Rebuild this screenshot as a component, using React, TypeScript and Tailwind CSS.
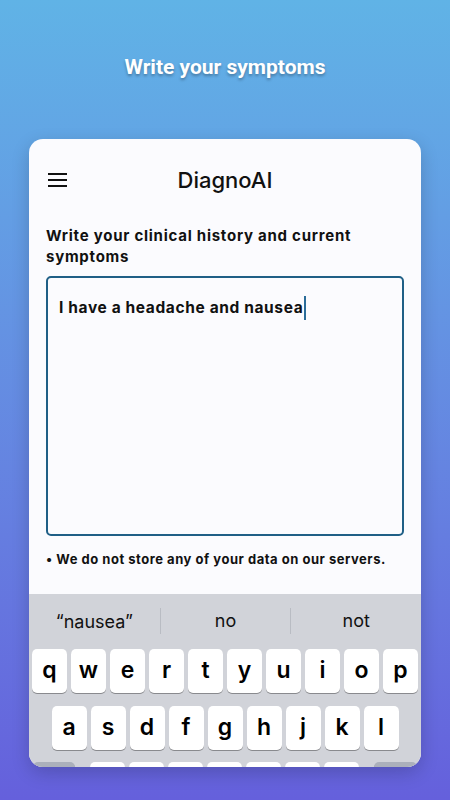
import React from "react";

const row1 = ["q", "w", "e", "r", "t", "y", "u", "i", "o", "p"];
const row2 = ["a", "s", "d", "f", "g", "h", "j", "k", "l"];
const row3 = ["z", "x", "c", "v", "b", "n", "m"];

const Key = ({ label }: { label?: string }) => (
  <div className="w-[35px] h-[44px] rounded-[5px] bg-white shadow-[0_1px_0_#898a8e] flex items-center justify-center text-[23px] font-semibold text-black leading-none pb-[2px]">
    {label}
  </div>
);

const App = () => {
  return (
    <div className="w-full h-[800px] overflow-hidden bg-gradient-to-b from-[#60b3e6] to-[#6560dc] font-['Inter',sans-serif]">
      <div className="h-[139px] flex items-center justify-center pb-[3px]">
        <h1 className="text-white text-[21px] font-bold font-['Roboto',sans-serif] [text-shadow:0_2px_3px_rgba(0,0,0,0.3)]">
          Write your symptoms
        </h1>
      </div>

      <div className="mx-[29px] h-[628px] rounded-[14px] bg-[#fbfbfe] overflow-hidden shadow-[0_6px_18px_rgba(0,0,0,0.18)] flex flex-col">
        {/* header */}
        <div className="relative h-[82px] flex items-center justify-center shrink-0">
          <svg className="absolute left-[19px] top-[33px]" width="19" height="16" viewBox="0 0 19 16">
            <rect x="0" y="1" width="19" height="2" fill="#111" />
            <rect x="0" y="7" width="19" height="2" fill="#111" />
            <rect x="0" y="13" width="19" height="2" fill="#111" />
          </svg>
          <span className="text-[22px] font-medium text-[#111]">DiagnoAI</span>
        </div>

        <p className="mt-[4px] px-[17px] text-[15px] leading-[21px] font-bold tracking-[0.05em] text-[#111]">
          Write your clinical history and current symptoms
        </p>

        <div className="mx-[17px] mt-[9px] h-[260px] shrink-0 rounded-[5px] border-2 border-[#1f5f86] pl-[11px] pt-[18px]">
          <div className="text-[15.5px] leading-[22px] font-bold tracking-[0.04em] text-[#111] flex items-center">
            I have a headache and nausea
            <span className="inline-block w-[2px] h-[24px] bg-[#2a6c99] ml-[1px]" />
          </div>
        </div>

        <p className="mt-[13px] px-[17px] text-[13px] leading-[20px] font-bold tracking-[0.04em] text-[#111]">
          • We do not store any of your data on our servers.
        </p>

        {/* keyboard */}
        <div className="mt-[25px] flex-1 bg-[#d1d3d9] shrink-0">
          <div className="h-[54px] grid grid-cols-3 items-center text-[18px] text-[#111]">
            <div className="text-center">“nausea”</div>
            <div className="text-center border-l border-[#b9bcc3] h-[26px] leading-[26px]">no</div>
            <div className="text-center border-l border-[#b9bcc3] h-[26px] leading-[26px]">not</div>
          </div>
          <div className="mt-[1px] flex justify-center gap-[4px]">
            {row1.map((k) => (
              <Key key={k} label={k} />
            ))}
          </div>
          <div className="mt-[13px] flex justify-center gap-[4px]">
            {row2.map((k) => (
              <Key key={k} label={k} />
            ))}
          </div>
          <div className="mt-[12px] px-[4px] flex justify-between">
            <div className="w-[42px] h-[44px] rounded-[5px] bg-[#abb0bb] shadow-[0_1px_0_#898a8e]" />
            <div className="flex gap-[4px]">
              {row3.map((k) => (
                <Key key={k} />
              ))}
            </div>
            <div className="w-[43px] h-[44px] rounded-[5px] bg-[#abb0bb] shadow-[0_1px_0_#898a8e]" />
          </div>
        </div>
      </div>
    </div>
  );
};

export default App;
